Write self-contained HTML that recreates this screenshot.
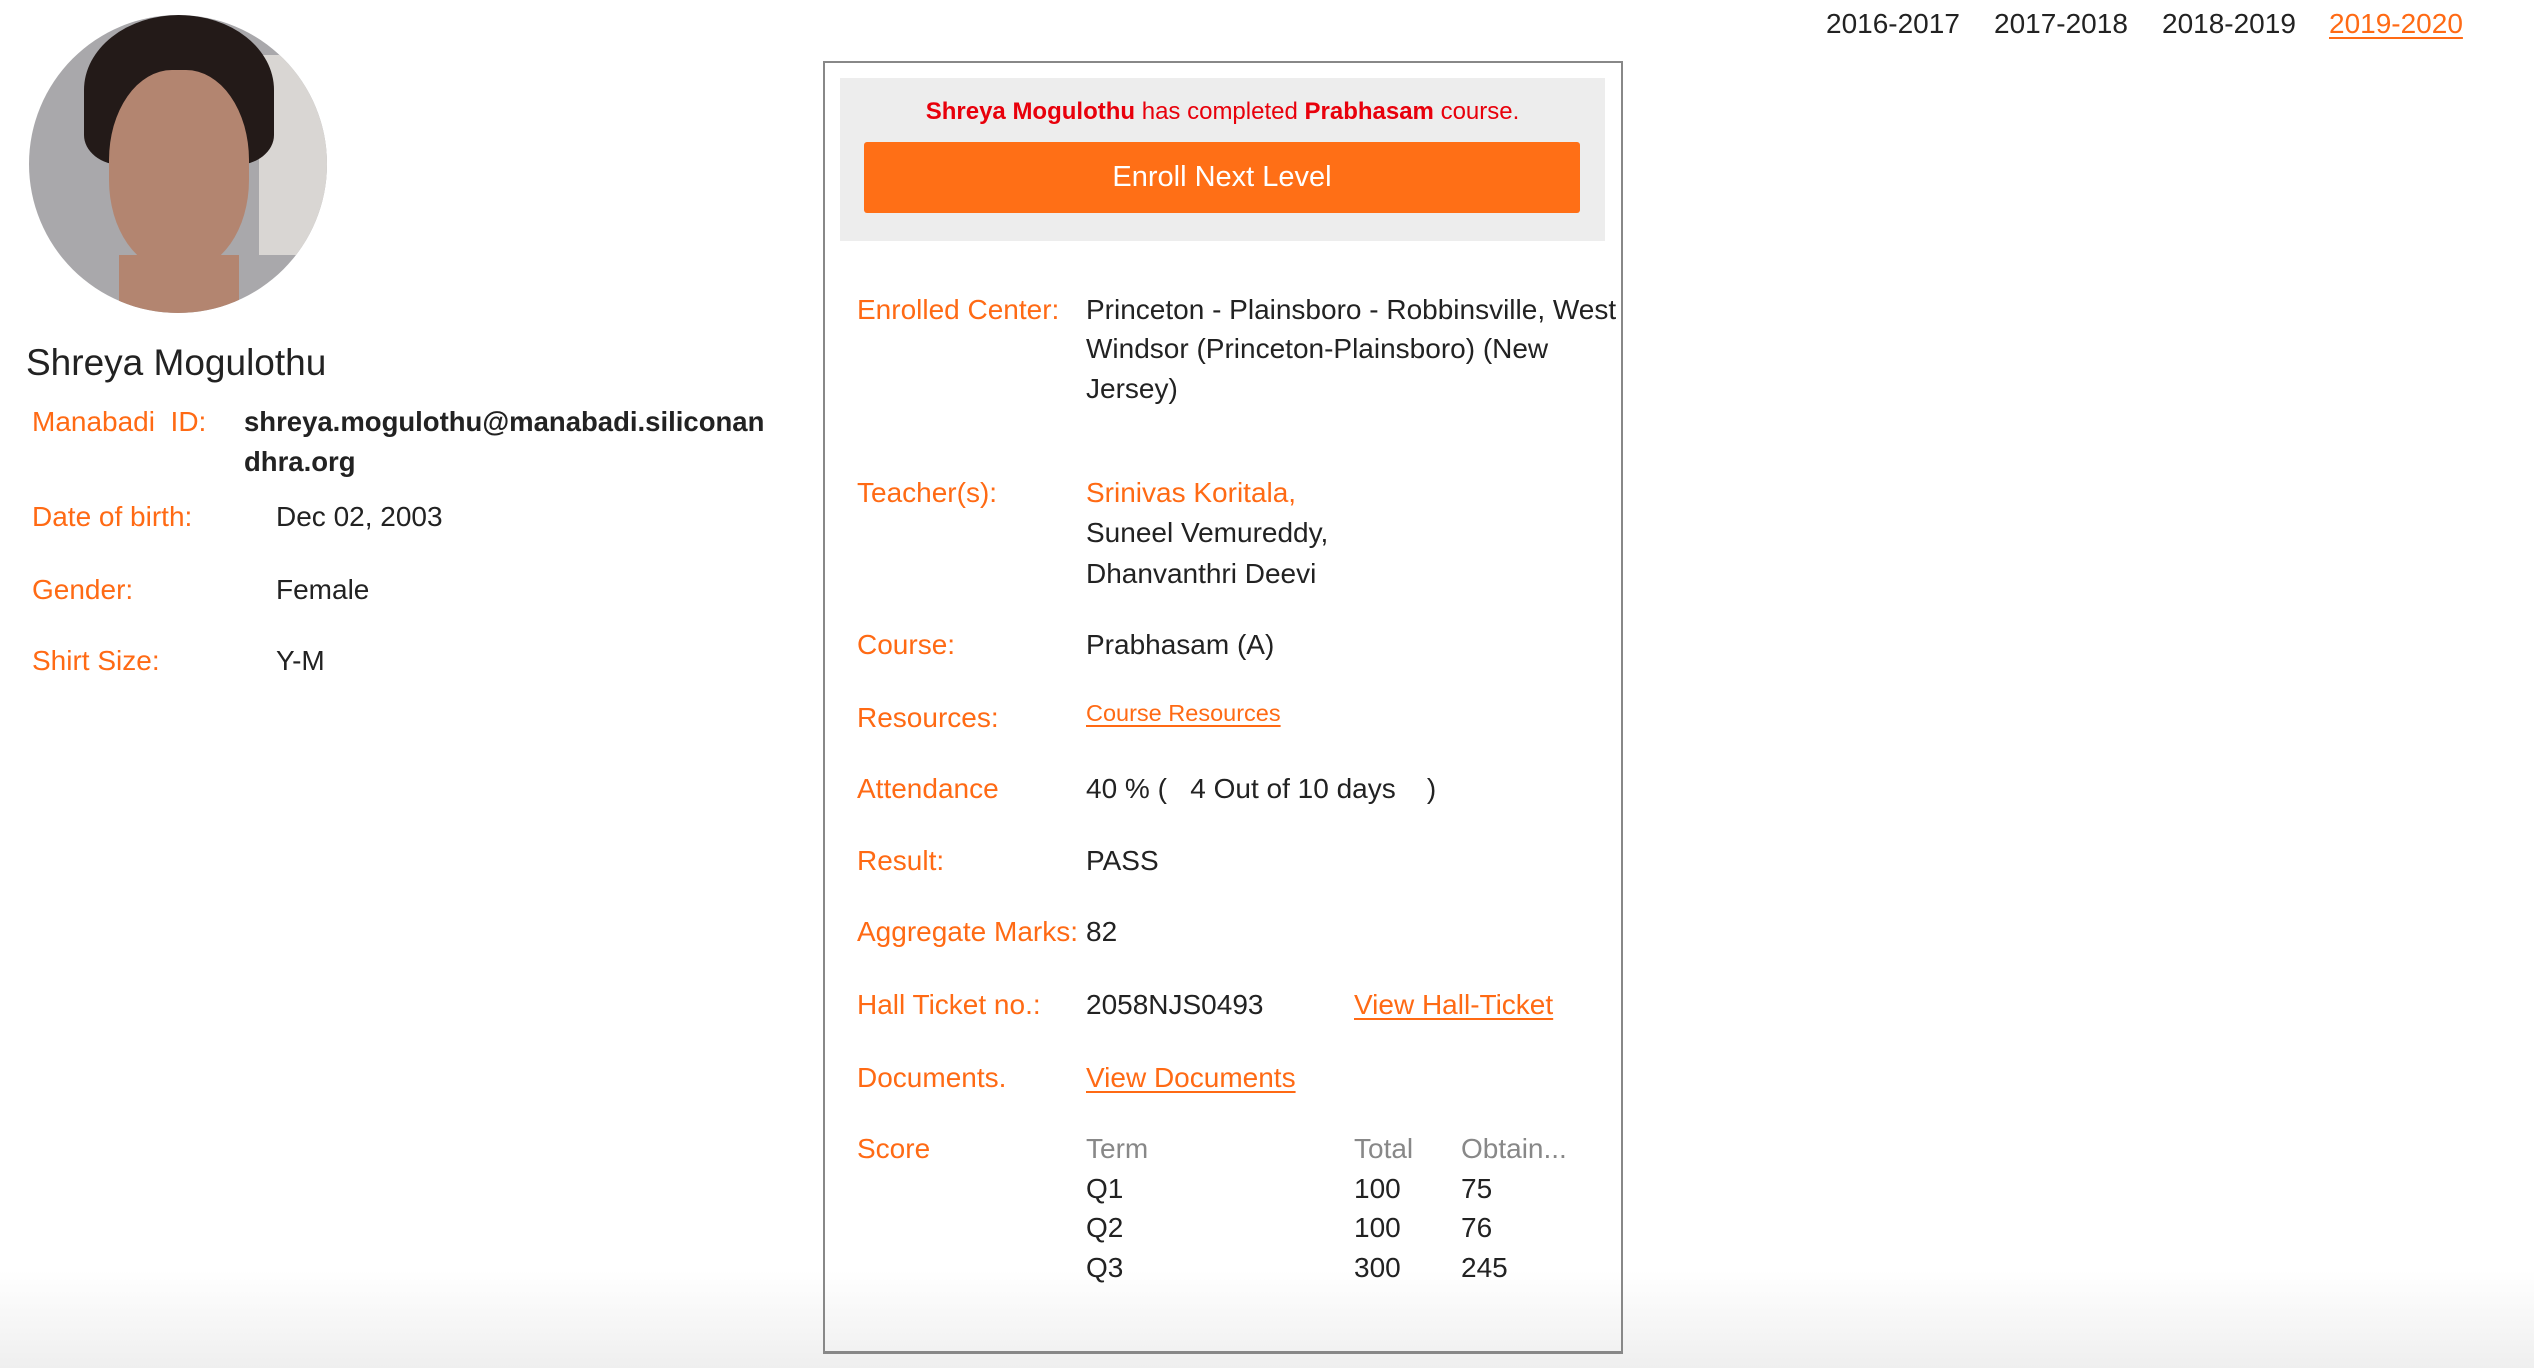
<!DOCTYPE html>
<html><head><meta charset="utf-8"><style>
*{margin:0;padding:0;box-sizing:border-box}
body{width:2534px;height:1368px;position:relative;overflow:hidden;font-family:"Liberation Sans",Arial,sans-serif;color:#222;background:linear-gradient(#fff 0,#fff 1270px,#efefef 1368px)}
.a{position:absolute;white-space:nowrap;font-size:28px;line-height:40px}
.o{color:#ff6a14}
.g{color:#888}
u{text-decoration:underline;text-underline-offset:4px}
</style></head><body>
<div class="a" style="left:1826px;top:4px">2016-2017</div>
<div class="a" style="left:1994px;top:4px">2017-2018</div>
<div class="a" style="left:2162px;top:4px">2018-2019</div>
<div class="a o" style="left:2329px;top:4px"><u>2019-2020</u></div>

<div style="position:absolute;left:29px;top:15px;width:298px;height:298px;border-radius:50%;overflow:hidden;background:#a9a8ab">
<div style="position:absolute;left:230px;top:40px;width:70px;height:200px;background:#d9d6d3"></div>
<div style="position:absolute;left:55px;top:0;width:190px;height:150px;border-radius:50% 50% 20% 20%;background:#231a18"></div>
<div style="position:absolute;left:80px;top:55px;width:140px;height:200px;border-radius:45%;background:#b38570"></div>
<div style="position:absolute;left:90px;top:240px;width:120px;height:70px;background:#b38570"></div>
</div>
<div class="a" style="left:26px;top:341px;font-size:37px;line-height:44px">Shreya Mogulothu</div>

<div class="a o" style="left:32px;top:402px">Manabadi&nbsp; ID:</div>
<div class="a" style="left:244px;top:402px;font-weight:bold;font-size:27.5px">shreya.mogulothu@manabadi.siliconan</div>
<div class="a" style="left:244px;top:442px;font-weight:bold;font-size:27.5px">dhra.org</div>
<div class="a o" style="left:32px;top:497px">Date of birth:</div><div class="a" style="left:276px;top:497px">Dec 02, 2003</div>
<div class="a o" style="left:32px;top:570px">Gender:</div><div class="a" style="left:276px;top:570px">Female</div>
<div class="a o" style="left:32px;top:641px">Shirt Size:</div><div class="a" style="left:276px;top:641px">Y-M</div>

<div style="position:absolute;left:823px;top:61px;width:800px;height:1293px;border:2px solid #888;border-bottom-width:3px;background:transparent"></div>
<div style="position:absolute;left:840px;top:78px;width:765px;height:163px;background:#ededed"></div>
<div class="a" style="left:840px;top:92px;width:765px;text-align:center;font-size:24px;color:#e8000b"><b>Shreya Mogulothu</b> has completed <b>Prabhasam</b> course.</div>
<div style="position:absolute;left:864px;top:142px;width:716px;height:71px;background:#ff6f16;border-radius:3px;color:#fff;font-size:29px;line-height:71px;text-align:center">Enroll Next Level</div>

<div class="a o" style="left:857px;top:290px">Enrolled Center:</div>
<div class="a" style="left:1086px;top:290px">Princeton - Plainsboro - Robbinsville, West</div>
<div class="a" style="left:1086px;top:329px">Windsor (Princeton-Plainsboro) (New</div>
<div class="a" style="left:1086px;top:369px">Jersey)</div>
<div class="a o" style="left:857px;top:473px">Teacher(s):</div>
<div class="a o" style="left:1086px;top:473px">Srinivas Koritala,</div>
<div class="a" style="left:1086px;top:513px">Suneel Vemureddy,</div>
<div class="a" style="left:1086px;top:554px">Dhanvanthri Deevi</div>
<div class="a o" style="left:857px;top:625px">Course:</div><div class="a" style="left:1086px;top:625px">Prabhasam (A)</div>
<div class="a o" style="left:857px;top:698px">Resources:</div><div class="a o" style="left:1086px;top:693px;font-size:23.5px"><u>Course Resources</u></div>
<div class="a o" style="left:857px;top:769px">Attendance</div><div class="a" style="left:1086px;top:769px">40 % (&nbsp;&nbsp; 4 Out of 10 days &nbsp;&nbsp; )</div>
<div class="a o" style="left:857px;top:841px">Result:</div><div class="a" style="left:1086px;top:841px">PASS</div>
<div class="a o" style="left:857px;top:912px">Aggregate Marks:</div><div class="a" style="left:1086px;top:912px">82</div>
<div class="a o" style="left:857px;top:985px">Hall Ticket no.:</div><div class="a" style="left:1086px;top:985px">2058NJS0493</div><div class="a o" style="left:1354px;top:985px"><u>View Hall-Ticket</u></div>
<div class="a o" style="left:857px;top:1058px">Documents.</div><div class="a o" style="left:1086px;top:1058px"><u>View Documents</u></div>
<div class="a o" style="left:857px;top:1129px">Score</div>
<div class="a g" style="left:1086px;top:1129px">Term</div><div class="a g" style="left:1354px;top:1129px">Total</div><div class="a g" style="left:1461px;top:1129px">Obtain...</div>
<div class="a" style="left:1086px;top:1169px">Q1</div><div class="a" style="left:1354px;top:1169px">100</div><div class="a" style="left:1461px;top:1169px">75</div>
<div class="a" style="left:1086px;top:1208px">Q2</div><div class="a" style="left:1354px;top:1208px">100</div><div class="a" style="left:1461px;top:1208px">76</div>
<div class="a" style="left:1086px;top:1248px">Q3</div><div class="a" style="left:1354px;top:1248px">300</div><div class="a" style="left:1461px;top:1248px">245</div>
</body></html>
